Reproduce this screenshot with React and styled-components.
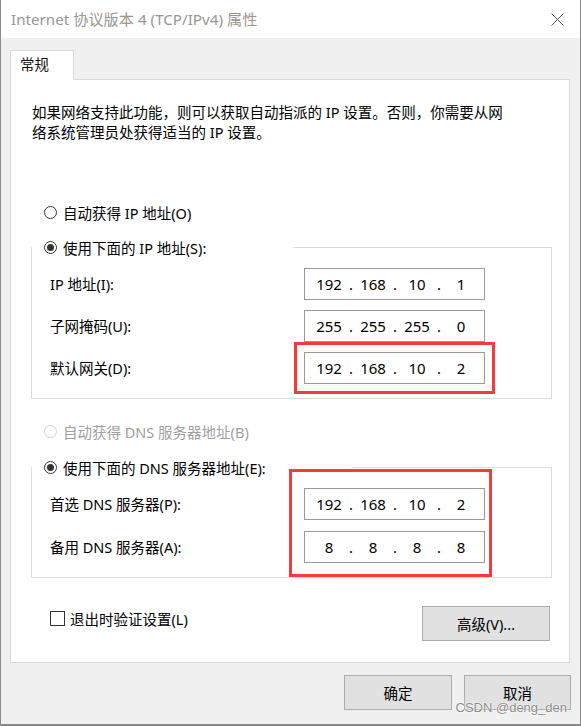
import React from 'react';
import styled, { createGlobalStyle, css } from 'styled-components';

const Global = createGlobalStyle`
  html, body { margin: 0; padding: 0; background: #fff; }
  #root { width: 581px; height: 726px; }
`;

const FONT = `"Noto Sans", "Noto Sans CJK SC", sans-serif`;

const Window = styled.div`
  position: relative;
  width: 581px;
  height: 726px;
  box-sizing: border-box;
  border: 1px solid #8a8a8a;
  border-top: none;
  border-bottom-width: 2px;
  display: flex;
  flex-direction: column;
  background: #f0f0f0;
  font-family: ${FONT};
  font-size: 14.5px;
  color: #000;
`;

const TitleBar = styled.div`
  height: 38px;
  flex: none;
  display: flex;
  align-items: center;
  background: #fff;
  padding-left: 10px;
`;

const Title = styled.div`
  font-size: 15.2px;
  color: #9a9690;
  line-height: 20px;
  white-space: nowrap;
`;

const CloseButton = styled.div`
  margin-left: auto;
  width: 46px;
  height: 38px;
  display: flex;
  align-items: center;
  justify-content: center;
`;

const Body = styled.div`
  flex: 1;
  display: flex;
  flex-direction: column;
  padding: 12px 10px 0 9px;
`;

const TabStrip = styled.div`
  display: flex;
  height: 30px;
  position: relative;
  z-index: 1;
  margin-bottom: -1px;
`;

const Tab = styled.div`
  width: 64px;
  box-sizing: border-box;
  background: #fff;
  border: 1px solid #d9d9d9;
  border-bottom: none;
  padding: 3px 0 0 9px;
  line-height: 20px;
  font-size: 14.5px;
  color: #111;
`;

const Panel = styled.div`
  background: #fff;
  border: 1px solid #d9d9d9;
  padding: 22px 17px 21px 20px;
  display: flex;
  flex-direction: column;
`;

const Intro = styled.div`
  margin-left: 1px;
  line-height: 20px;
`;

const IntroLine = styled.span`
  display: block;
  white-space: nowrap;
`;

const RadioRow = styled.div`
  display: flex;
  align-items: center;
  gap: 6px;
  height: 20px;
  margin: ${p => p.$mt || 0}px 0 0 ${p => (p.$ml ?? 13)}px;
  color: ${p => (p.$disabled ? '#a0a0a0' : '#000')};
  white-space: nowrap;
`;

const RadioCircle = styled.span`
  width: 13px;
  height: 13px;
  box-sizing: border-box;
  border-radius: 50%;
  border: 1px solid ${p => (p.$disabled ? '#cfcfcf' : '#333')};
  background: #fff;
  display: flex;
  align-items: center;
  justify-content: center;
  flex: none;
  ${p =>
    p.$checked &&
    css`
      &::after {
        content: '';
        width: 7px;
        height: 7px;
        border-radius: 50%;
        background: #333;
      }
    `}
`;

const Group = styled.div`
  border: 1px solid #dcdcdc;
  margin-top: ${p => p.$mt}px;
  padding: 0 66px 14px 18px;
`;

const Legend = styled.div`
  margin: -11px 0 0 -18px;
  width: ${p => p.$w}px;
  background: #fff;
`;

const Rows = styled.div`
  position: relative;
  margin-top: 11px;
  display: flex;
  flex-direction: column;
  gap: ${p => p.$gap}px;
  ${p =>
    p.$highlight &&
    css`
      &::after {
        content: '';
        position: absolute;
        top: -19px;
        bottom: -14px;
        left: 239px;
        right: -7px;
        border: 3px solid #f23c3c;
        pointer-events: none;
      }
    `}
`;

const FieldRow = styled.div`
  display: flex;
  align-items: center;
  height: 32px;
`;

const FieldLabel = styled.div`
  flex: 1;
  white-space: nowrap;
  line-height: 20px;
`;

const IpInput = styled.div`
  width: 181px;
  height: 32px;
  box-sizing: border-box;
  border: 1px solid #999;
  background: #fff;
  display: flex;
  align-items: center;
  padding-left: 7px;
  font-size: 15px;
  line-height: 20px;
  ${p =>
    p.$highlight &&
    css`
      outline: 3px solid #f23c3c;
      outline-offset: 7px;
    `}
`;

const Octet = styled.span`
  width: 34px;
  text-align: center;
`;

const Dot = styled.span`
  width: 10px;
  text-align: center;
`;

const BottomRow = styled.div`
  margin-top: 28px;
  display: flex;
  align-items: flex-start;
`;

const CheckRow = styled.div`
  display: flex;
  align-items: center;
  gap: 5px;
  height: 20px;
  margin: 2px 0 0 19px;
  white-space: nowrap;
`;

const CheckBox = styled.span`
  width: 15px;
  height: 15px;
  box-sizing: border-box;
  border: 1px solid #333;
  background: #fff;
  flex: none;
`;

const Button = styled.div`
  width: ${p => p.$w}px;
  height: 35px;
  box-sizing: border-box;
  border: 1px solid #adadad;
  background: #e1e1e1;
  display: flex;
  align-items: center;
  justify-content: center;
  ${p => p.$push && 'margin-left: auto;'}
  ${p => p.$mr && `margin-right: ${p.$mr}px;`}
`;

const Footer = styled.div`
  display: flex;
  justify-content: flex-end;
  gap: 12px;
  padding-top: 12px;
  margin-right: -1px;
`;

const Watermark = styled.div`
  position: absolute;
  right: 13px;
  top: 699px;
  font-size: 13px;
  line-height: 18px;
  color: #8c8c8c;
  text-shadow: 0 0 2px #fff, 0 0 2px #fff;
  font-family: "Liberation Sans", sans-serif;
`;

function Ip({ parts, highlight }) {
  return (
    <IpInput $highlight={highlight}>
      {parts.map((p, i) => (
        <React.Fragment key={i}>
          {i > 0 && <Dot>.</Dot>}
          <Octet>{p}</Octet>
        </React.Fragment>
      ))}
    </IpInput>
  );
}

function Radio({ label, checked, disabled, mt, ml }) {
  return (
    <RadioRow $disabled={disabled} $mt={mt} $ml={ml}>
      <RadioCircle $checked={checked} $disabled={disabled} />
      <span>{label}</span>
    </RadioRow>
  );
}

export default function App() {
  return (
    <>
      <Global />
      <Window>
        <TitleBar>
          <Title>Internet 协议版本 4 (TCP/IPv4) 属性</Title>
          <CloseButton>
            <svg width="13" height="13" viewBox="0 0 13 13">
              <path d="M0.5 0.5 L12.5 12.5 M12.5 0.5 L0.5 12.5" stroke="#555" strokeWidth="1" fill="none" />
            </svg>
          </CloseButton>
        </TitleBar>
        <Body>
          <TabStrip>
            <Tab>常规</Tab>
          </TabStrip>
          <Panel>
            <Intro>
              <IntroLine>如果网络支持此功能，则可以获取自动指派的 IP 设置。否则，你需要从网</IntroLine>
              <IntroLine>络系统管理员处获得适当的 IP 设置。</IntroLine>
            </Intro>
            <Radio label="自动获得 IP 地址(O)" mt={60} />
            <Group $mt={25}>
              <Legend $w={261}>
                <Radio label="使用下面的 IP 地址(S):" checked ml={12} />
              </Legend>
              <Rows $gap={10}>
                <FieldRow>
                  <FieldLabel>IP 地址(I):</FieldLabel>
                  <Ip parts={['192', '168', '10', '1']} />
                </FieldRow>
                <FieldRow>
                  <FieldLabel>子网掩码(U):</FieldLabel>
                  <Ip parts={['255', '255', '255', '0']} />
                </FieldRow>
                <FieldRow>
                  <FieldLabel>默认网关(D):</FieldLabel>
                  <Ip parts={['192', '168', '10', '2']} highlight />
                </FieldRow>
              </Rows>
            </Group>
            <Radio label="自动获得 DNS 服务器地址(B)" disabled mt={22} />
            <Group $mt={26}>
              <Legend $w={320}>
                <Radio label="使用下面的 DNS 服务器地址(E):" checked ml={12} />
              </Legend>
              <Rows $gap={11} $highlight>
                <FieldRow>
                  <FieldLabel>首选 DNS 服务器(P):</FieldLabel>
                  <Ip parts={['192', '168', '10', '2']} />
                </FieldRow>
                <FieldRow>
                  <FieldLabel>备用 DNS 服务器(A):</FieldLabel>
                  <Ip parts={['8', '8', '8', '8']} />
                </FieldRow>
              </Rows>
            </Group>
            <BottomRow>
              <CheckRow>
                <CheckBox />
                <span>退出时验证设置(L)</span>
              </CheckRow>
              <Button $w={128} $push $mr={2}>高级(V)...</Button>
            </BottomRow>
          </Panel>
          <Footer>
            <Button $w={108}>确定</Button>
            <Button $w={107}>取消</Button>
          </Footer>
        </Body>
        <Watermark>CSDN @deng_den</Watermark>
      </Window>
    </>
  );
}
